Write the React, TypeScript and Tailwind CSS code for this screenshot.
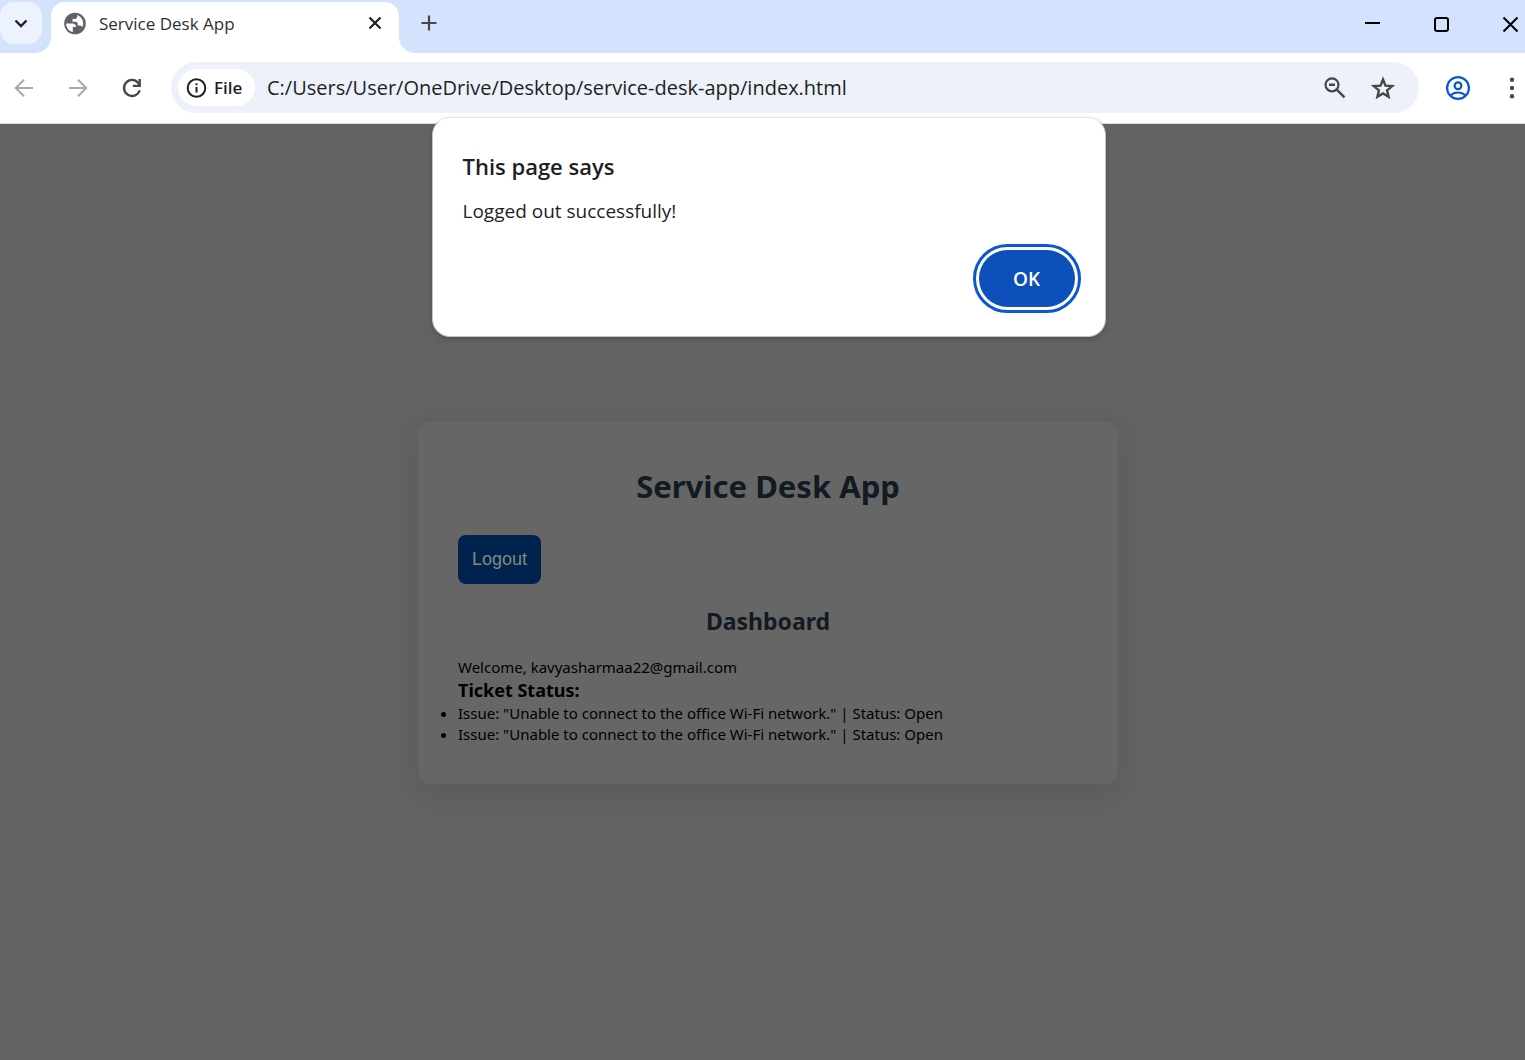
import type { ReactNode } from "react";

function Icon({ size, className, children }: { size: number; className?: string; children: ReactNode }) {
  return (
    <svg width={size} height={size} viewBox="0 0 24 24" fill="none" aria-hidden="true" className={className}>
      {children}
    </svg>
  );
}

function TabStrip() {
  return (
    <header className="flex h-[53px] bg-[#d3e3fd]">
      <div className="w-[51px] shrink-0 bg-white">
        <div className="h-full rounded-br-[16px] bg-[#d3e3fd] pt-0.5">
          <button
            type="button"
            aria-label="Search tabs"
            className="flex h-[42px] w-[42px] items-center justify-center rounded-[14px] bg-[#ecf3fe]"
          >
            <Icon size={24} className="text-[#1f1f1f]">
              <path d="M6.500 9.500 12 15l5.500-5.500" stroke="currentColor" strokeWidth="2.400" />
            </Icon>
          </button>
        </div>
      </div>
      <div className="bg-[#d3e3fd] pt-0.5">
        <div className="flex h-full w-[348px] items-center rounded-t-[14px] bg-white pr-3 pb-2 pl-3">
          <Icon size={24}>
            <circle cx="12" cy="11.500" r="10.800" fill="#5f6368" />
            <path d="M3 11.500h6.500c2.300 0 3.500 1.200 3.500 3.500H9.800v5.200A9 9 0 0 1 3 11.500z" fill="white" />
            <path
              d="M14.300 2.900v1.700c0 1.500-1 2.300-2.400 2.300H9.500v2.800h3.200c1.300 0 2 .8 2 2v1.800h2.300c1.300 0 2 .8 2.200 2A9 9 0 0 0 14.300 2.900z"
              fill="white"
            />
          </Icon>
          <span className="ml-3 font-['Open_Sans',sans-serif] text-[17px] leading-6 text-[#303134]">Service Desk App</span>
          <button type="button" aria-label="Close tab" className="ml-auto flex h-6 w-6 items-center justify-center">
            <Icon size={24}>
              <path d="m6.500 5.500 11 11m0-11-11 11" stroke="#1f1f1f" strokeWidth="2.200" />
            </Icon>
          </button>
        </div>
      </div>
      <div className="min-w-0 flex-1 bg-white">
        <div className="flex h-full items-start rounded-bl-[16px] bg-[#d3e3fd] pt-[11px] pl-[18px]">
          <button type="button" aria-label="New tab" className="h-6 w-6">
            <Icon size={24}>
              <path d="M12 4.500v15M4.500 12h15" stroke="#474747" strokeWidth="2.200" />
            </Icon>
          </button>
          <div className="ml-auto flex gap-[45px] pt-px pr-[3px]">
            <button type="button" aria-label="Minimize">
              <Icon size={24}>
                <path d="M5 11h15" stroke="black" strokeWidth="2" />
              </Icon>
            </button>
            <button type="button" aria-label="Maximize">
              <Icon size={24}>
                <rect x="6" y="6" width="13" height="13" rx="2" stroke="black" strokeWidth="2" />
              </Icon>
            </button>
            <button type="button" aria-label="Close">
              <Icon size={24}>
                <path d="m5.500 5.500 14 14m0-14-14 14" stroke="black" strokeWidth="2" />
              </Icon>
            </button>
          </div>
        </div>
      </div>
    </header>
  );
}

function Toolbar() {
  return (
    <div className="flex h-[71px] items-center border-b border-[#dadce0] bg-white pb-px pl-3 font-['Open_Sans',sans-serif]">
      <div className="flex gap-[30px]">
        <button type="button" aria-label="Back">
          <Icon size={24}>
            <path d="M21 12H4.500M12 3.800 3.800 12l8.200 8.200" stroke="#a9a9a9" strokeWidth="2" />
          </Icon>
        </button>
        <button type="button" aria-label="Forward">
          <Icon size={24}>
            <path d="M3 12h16.500M12 3.800l8.200 8.200-8.200 8.200" stroke="#a9a9a9" strokeWidth="2" />
          </Icon>
        </button>
        <button type="button" aria-label="Reload">
          <Icon size={24}>
            <path d="M19.700 14.200a8 8 0 1 1-1.500-7.300l1.500 1.800" stroke="#474747" strokeWidth="2.300" />
            <path d="M20.900 3v8h-8V8.700h5.600V3z" fill="#474747" />
          </Icon>
        </button>
      </div>
      <div className="ml-[27px] flex h-[51px] min-w-0 flex-1 items-center rounded-full bg-[#ecf1fa] pl-[7px]">
        <button
          type="button"
          className="flex h-[37px] w-[77px] shrink-0 items-center gap-1.5 rounded-full bg-white pl-1.5 text-[17px] leading-6 font-semibold text-[#1f1f1f]"
        >
          <Icon size={24}>
            <circle cx="12.500" cy="12" r="8.800" stroke="#1f1f1f" strokeWidth="2" />
            <path d="M12.500 11v5.500M12.500 7.300v2" stroke="#1f1f1f" strokeWidth="2" />
          </Icon>
          File
        </button>
        <input
          type="text"
          aria-label="Address"
          defaultValue="C:/Users/User/OneDrive/Desktop/service-desk-app/index.html"
          className="ml-3 h-8 min-w-0 flex-1 bg-transparent text-[20px] leading-8 text-[#1f1f1f] outline-none"
        />
        <div className="flex gap-6 pr-6">
          <button type="button" aria-label="Zoom">
            <Icon size={24}>
              <circle cx="9" cy="8.800" r="6.500" stroke="#474747" strokeWidth="2.200" />
              <path d="m13.500 13.300 8 8M6 8.800h6" stroke="#474747" strokeWidth="2.400" />
            </Icon>
          </button>
          <button type="button" aria-label="Bookmark this page">
            <Icon size={24}>
              <path
                d="m12 3.500 2.500 6.100 6.600.5-5 4.300 1.500 6.400L12 17.400l-5.600 3.400 1.500-6.400-5-4.300 6.600-.5z"
                stroke="#474747"
                strokeWidth="2.400"
              />
            </Icon>
          </button>
        </div>
      </div>
      <button type="button" aria-label="Profile" className="ml-[27px]">
        <Icon size={24}>
          <circle cx="12" cy="12" r="10.900" stroke="#0b57d0" strokeWidth="2.200" />
          <circle cx="12" cy="9.700" r="3.400" stroke="#0b57d0" strokeWidth="2.200" />
          <path d="M4.500 19.500c1.900-2 4.600-3 7.500-3s5.600 1 7.500 3" stroke="#0b57d0" strokeWidth="2.200" />
        </Icon>
      </button>
      <button type="button" aria-label="Menu" className="mr-px ml-[30px]">
        <Icon size={24}>
          <g fill="#474747">
            <circle cx="12" cy="3.800" r="2.200" />
            <circle cx="12" cy="12" r="2.200" />
            <circle cx="12" cy="20.200" r="2.200" />
          </g>
        </Icon>
      </button>
    </div>
  );
}

function AlertDialog() {
  return (
    <div className="absolute inset-x-0 -top-[7px] flex justify-center pl-3">
      <div
        role="alertdialog"
        aria-labelledby="alert-title"
        aria-describedby="alert-message"
        className="w-[674px] rounded-[18px] border border-[#c4c4c4] border-t-[#e4e5e7] bg-white pt-8 pr-[30px] pb-[29px] pl-[30px] font-['Open_Sans',sans-serif] text-[#1f1f1f] shadow-[0_2px_5px_rgba(0,0,0,0.18)]"
      >
        <h2 id="alert-title" className="text-[22px] leading-8 font-semibold">
          This page says
        </h2>
        <p id="alert-message" className="mt-[17px] text-[19px] leading-6">
          Logged out successfully!
        </p>
        <div className="mt-[27px] flex justify-end">
          <button
            type="button"
            className="h-[57px] w-24 rounded-full bg-[#0d50b9] text-[19px] leading-6 font-semibold text-white outline-3 outline-offset-3 outline-[#0b57d0]"
          >
            OK
          </button>
        </div>
      </div>
    </div>
  );
}

const tickets = [
  { id: 1, issue: "Unable to connect to the office Wi-Fi network.", status: "Open" },
  { id: 2, issue: "Unable to connect to the office Wi-Fi network.", status: "Open" },
];

function Dashboard() {
  return (
    <section className="w-full max-w-[700px] rounded-[12px] bg-[#666666] px-10 pt-10 pb-[39px] text-black shadow-[0_8px_24px_rgba(0,0,0,0.08)]">
      <h1 className="text-center text-[31px] leading-[48px] font-bold text-[#121a22]">Service Desk App</h1>
      <button
        type="button"
        className="mt-[25px] block h-[49px] rounded-[8px] bg-[#00234d] px-3.5 pb-0.5 font-['Liberation_Sans',sans-serif] text-[18px] leading-6 text-[#858585]"
      >
        Logout
      </button>
      <h2 className="mt-[21px] text-center text-[23px] leading-8 font-bold text-[#121a22]">Dashboard</h2>
      <p className="mt-5 text-[15px] leading-[21px]">Welcome, kavyasharmaa22@gmail.com</p>
      <h3 className="text-[18px] leading-[25px] font-bold">Ticket Status:</h3>
      <ul className="list-disc text-[15px] leading-[21px]">
        {tickets.map((t) => (
          <li key={t.id}>{`Issue: "${t.issue}" | Status: ${t.status}`}</li>
        ))}
      </ul>
    </section>
  );
}

export default function App() {
  return (
    <div className="flex min-h-screen flex-col">
      <TabStrip />
      <Toolbar />
      <main className="relative flex flex-1 items-start justify-center bg-[#616264] pt-[298px] pl-[11px] font-['Noto_Sans',sans-serif]">
        <Dashboard />
        <AlertDialog />
      </main>
    </div>
  );
}
